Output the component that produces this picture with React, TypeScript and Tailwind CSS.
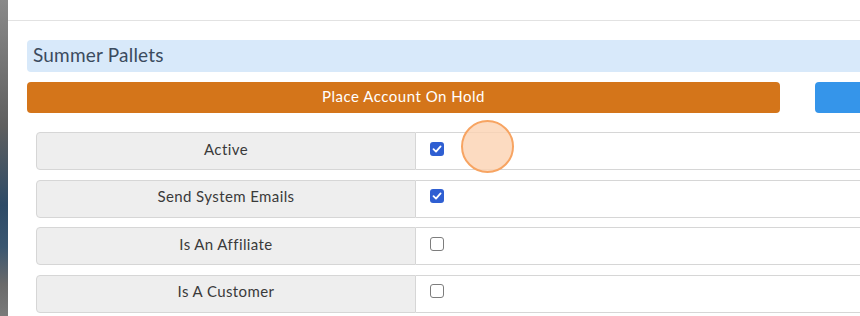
import React from "react";

const rows = [
  { label: "Active", checked: true },
  { label: "Send System Emails", checked: true },
  { label: "Is An Affiliate", checked: false },
  { label: "Is A Customer", checked: false },
];

function Check({ checked }: { checked: boolean }) {
  if (!checked) {
    return <div className="h-[14px] w-[14px] rounded-[3px] border border-[#7d7d7d] bg-white" />;
  }
  return (
    <div className="flex h-[14px] w-[14px] items-center justify-center rounded-[3px] bg-[#2f5fd2]">
      <svg width="10" height="10" viewBox="0 0 10 10">
        <path d="M1.5 5.2 L4 7.6 L8.6 2.4" fill="none" stroke="white" strokeWidth="1.8" strokeLinecap="round" strokeLinejoin="round" />
      </svg>
    </div>
  );
}

export default function App() {
  return (
    <div className="relative flex h-[316px] w-[860px] overflow-hidden bg-white font-['Lato',sans-serif]">
      {/* blurred backdrop edge */}
      <div className="w-[8px] shrink-0 bg-[linear-gradient(to_bottom,#8a8a8a_0%,#5f5f5f_40%,#2d4a66_65%,#3a5670_78%,#6a6a6a_90%,#7a7a7a_100%)]" />

      <div className="flex-1">
        <div className="h-[21px] border-b border-[#e2e2e2]" />

        <div className="pl-[19px] pt-[19px]">
          <div className="flex h-[32px] items-center rounded-l-[4px] bg-[#d8e9fa] pb-[2px] pl-[6px] text-[19px] tracking-[0.2px] text-[#3b4b5e]">
            Summer Pallets
          </div>

          <div className="mt-[10px] flex h-[31px] gap-[35px]">
            <button className="flex w-[753px] items-center justify-center rounded-[4px] bg-[#d4751a] pb-[3px] text-[15px] tracking-[0.5px] text-white">
              Place Account On Hold
            </button>
            <div className="flex-1 rounded-l-[4px] bg-[#3595ea]" />
          </div>

          <div className="mt-[19px] flex flex-col gap-[9.5px] pl-[9px]">
            {rows.map((r) => (
              <div key={r.label} className="flex h-[38px]">
                <div className="flex w-[380px] shrink-0 items-center justify-center rounded-l-[4px] border border-[#d6d6d6] bg-[#eeeeee] pb-[4px] text-[15px] tracking-[0.4px] text-[#3a3a3a]">
                  {r.label}
                </div>
                <div className="flex flex-1 items-center border-y border-[#d6d6d6] pb-[5px] pl-[14px]">
                  <Check checked={r.checked} />
                </div>
              </div>
            ))}
          </div>
        </div>
      </div>

      {/* click indicator */}
      <div className="absolute left-[461px] top-[120px] h-[53px] w-[53px] rounded-full border-2 border-[#f7a462] bg-[#fbd2b2]/80" />
    </div>
  );
}
